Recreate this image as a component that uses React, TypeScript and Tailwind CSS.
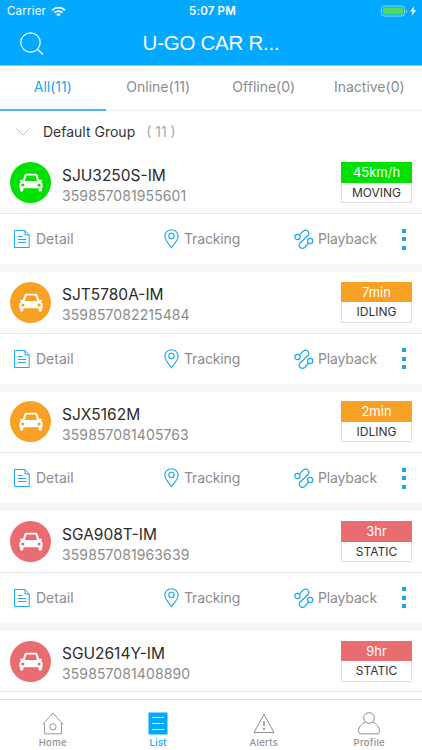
import { useState } from 'react';

interface Vehicle {
    name: string;
    imei: string;
    value: string;
    status: 'MOVING' | 'IDLING' | 'STATIC';
}

const vehicles: Vehicle[] = [
    { name: 'SJU3250S-IM', imei: '359857081955601', value: '45km/h', status: 'MOVING' },
    { name: 'SJT5780A-IM', imei: '359857082215484', value: '7min', status: 'IDLING' },
    { name: 'SJX5162M', imei: '359857081405763', value: '2min', status: 'IDLING' },
    { name: 'SGA908T-IM', imei: '359857081963639', value: '3hr', status: 'STATIC' },
    { name: 'SGU2614Y-IM', imei: '359857081408890', value: '9hr', status: 'STATIC' },
];

const statusColors = {
    MOVING: 'bg-[#00e001]',
    IDLING: 'bg-[#f9a124]',
    STATIC: 'bg-[#e96c70]',
};

const filters = ['All(11)', 'Online(11)', 'Offline(0)', 'Inactive(0)'];

function StatusBar() {
    return (
        <div className="h-[22px] flex items-center text-white text-[11.5px] leading-none">
            <div className="flex-1 flex items-center pl-[7px]">
                <span className="tracking-[0.2px] pt-px">Carrier</span>
                <svg className="ml-[5px]" width="15" height="11" viewBox="0 0 15 11">
                    <path d="M1.1 4.2a9.2 9.2 0 0 1 12.8 0" fill="none" stroke="white" strokeWidth="1.9" />
                    <path d="M3.5 6.7a5.8 5.8 0 0 1 8 0" fill="none" stroke="white" strokeWidth="1.8" />
                    <path d="M5.2 8.3a3.3 3.3 0 0 1 4.6 0L7.5 10.6z" fill="white" />
                </svg>
            </div>
            <span className="font-semibold tracking-[0.15px] pl-px pt-px">5:07 PM</span>
            <div className="flex-1 flex items-center justify-end pr-[5px]">
                <svg width="36" height="13" viewBox="0 0 36 13">
                    <rect x=".5" y="1" width="23" height="10" rx="2.4" fill="none" stroke="#8bd5fb" />
                    <rect x="2" y="2.5" width="20" height="7" rx="1" fill="#4cd964" />
                    <path d="M25 4.5V8c1.4-.4 1.4-3.1 0-3.5z" fill="#8bd5fb" />
                    <path d="M33.3 1.3L29 6.6h2.5l-.8 4.2L35 5.3h-2.6z" fill="white" />
                </svg>
            </div>
        </div>
    );
}

function CarIcon() {
    return (
        <svg width="24" height="19" viewBox="0 0 24 19">
            <path
                fillRule="evenodd"
                fill="white"
                d="M7.6.7h8.8c1.2 0 1.9.5 2.2 1.5l1.5 4.9 1-.3c1.2-.3 2 .1 2 .8s-.7 1-1.6 1c1.4.8 2.1 1.8 2.1 3.2v3.5h-.7v1.7c0 1-.6 1.6-1.6 1.6s-1.6-.6-1.6-1.6v-1.7H4.3V17c0 1-.6 1.6-1.6 1.6S1.1 18 1.1 17v-1.7H.4v-3.5c0-1.4.7-2.4 2.1-3.2-.9 0-1.6-.3-1.6-1s.8-1.1 2-.8l1 .3 1.5-4.9C5.7 1.2 6.4.7 7.6.7zM8.1 2.6c-.5 0-.8.2-.9.7L5.9 8h12.2l-1.3-4.7c-.1-.5-.4-.7-.9-.7zM3.9 10.4a1.6 1.6 0 1 0 0 3.2 1.6 1.6 0 0 0 0-3.2zm16.2 0a1.6 1.6 0 1 0 0 3.2 1.6 1.6 0 0 0 0-3.2z"
            />
        </svg>
    );
}

function DetailIcon() {
    return (
        <svg width="16" height="20" viewBox="0 0 16 20" fill="none" stroke="#22a8ea">
            <path d="M.5 1.5H11L15.2 6v12.5H.5zM11 1.5V6h4.2" />
            <path d="M4 7.5h4.5M4 10.5h8M4 13.5h8" />
        </svg>
    );
}

function TrackingIcon() {
    return (
        <svg width="15" height="20" viewBox="0 0 15 20" fill="none" stroke="#22a8ea" strokeWidth="1.1">
            <path d="M7.5 18.7C5.2 15.4.9 11 .9 7.4a6.6 6.6 0 0 1 13.2 0c0 3.6-4.3 8-6.6 11.3z" />
            <circle cx="7.5" cy="7" r="2.7" />
        </svg>
    );
}

function PlaybackIcon() {
    return (
        <svg width="20" height="20" viewBox="0 0 20 20" fill="none" stroke="#22a8ea" strokeWidth="1.2">
            <circle cx="3.5" cy="8" r="2.6" />
            <circle cx="16.2" cy="12" r="2.6" />
            <path d="M5.3 6.1l4-4.1c3.2-2.5 7 .8 4.9 4.3L6 14.2c-2.5 3.5 1.6 6.6 4.7 4.3l4-4.5" />
        </svg>
    );
}

function VehicleRow({ vehicle, showActions }: { vehicle: Vehicle; showActions: boolean }) {
    return (
        <div className={showActions ? 'h-[119.6px] shrink-0 border-b-8 border-[#f7f7f7] flex flex-col' : 'shrink-0'}>
            <div className="h-[61.5px] shrink-0 border-b border-[#e7e7e7] flex items-center px-[10px]">
                <div className={`size-[41px] rounded-full flex items-center justify-center ${statusColors[vehicle.status]}`}>
                    <CarIcon />
                </div>
                <div className="ml-[11px] flex-1">
                    <p className="text-[15.5px] leading-[20px] text-[#2b2b2b] mt-[6px]">{vehicle.name}</p>
                    <p className="text-[14px] leading-[20px] tracking-[0.1px] text-[#8c8c8c]">{vehicle.imei}</p>
                </div>
                <div className="w-[71px] h-[41px] text-center">
                    <div className={`h-[20.5px] text-white text-[13px] leading-[21px] ${statusColors[vehicle.status]}`}>
                        {vehicle.value}
                    </div>
                    <div className="h-[20.5px] border border-t-0 border-[#dfdfdf] text-[#333] text-[12px] leading-[20px]">
                        {vehicle.status}
                    </div>
                </div>
            </div>
            {showActions && (
                <div className="flex-1 flex items-center text-[14px] text-[#8c8c8c] leading-none">
                    <button className="w-[150px] pl-[14px] flex items-center gap-[6px]">
                        <DetailIcon />Detail
                    </button>
                    <button className="w-[144px] pl-[14px] flex items-center gap-[5px] tracking-[-0.15px]">
                        <TrackingIcon />Tracking
                    </button>
                    <button className="w-[100px] flex items-center gap-[4px] tracking-[-0.15px]">
                        <PlaybackIcon />Playback
                    </button>
                    <button className="ml-[8px] flex flex-col gap-[4.5px]">
                        <i className="size-[4px] bg-[#20a5e5]" />
                        <i className="size-[4px] bg-[#20a5e5]" />
                        <i className="size-[4px] bg-[#20a5e5]" />
                    </button>
                </div>
            )}
        </div>
    );
}

function HomeIcon() {
    return (
        <svg width="22" height="23" viewBox="0 0 22 23" fill="none" stroke="#999">
            <path d="M.8 12.5L11 .9l10.2 11.6M2.5 10.8v11h17v-11" />
            <circle cx="11" cy="14.8" r="3.1" />
        </svg>
    );
}

function ListIcon() {
    return (
        <svg width="20" height="23" viewBox="0 0 20 23">
            <path d="M.5.5h19v22H.5z" fill="#04a8ff" />
            <path d="M4 5.5h12M4 11.5h12M4 17.5h12" stroke="white" />
        </svg>
    );
}

function AlertsIcon() {
    return (
        <svg width="22" height="23" viewBox="0 0 22 23" fill="none" stroke="#8f8f8f">
            <path d="M11 2.5L21 20.5H1z" />
            <path d="M11 9v5M11 16v2" strokeWidth="1.5" />
        </svg>
    );
}

function ProfileIcon() {
    return (
        <svg width="22" height="23" viewBox="0 0 22 23" fill="none" stroke="#8f8f8f">
            <circle cx="11" cy="6" r="5.3" />
            <path d="M7.5 10.2C3.5 11.5.6 14.8.6 19.2c0 2.1.8 2.7 2.4 2.7h16c1.6 0 2.4-.6 2.4-2.7 0-4.4-2.9-7.7-6.9-9" />
        </svg>
    );
}

const navItems = [
    { label: 'Home', icon: HomeIcon },
    { label: 'List', icon: ListIcon },
    { label: 'Alerts', icon: AlertsIcon },
    { label: 'Profile', icon: ProfileIcon },
];

export default function App() {
    const [filter, setFilter] = useState(0);
    const [page, setPage] = useState('List');

    return (
        <div className="w-[422px] h-[750px] overflow-hidden bg-white flex flex-col font-['Inter',sans-serif]">
            <header className="h-[66px] shrink-0 bg-[#02a9ff] border-b border-[#7bd3fb]">
                <StatusBar />
                <div className="h-[43px] grid grid-cols-[1fr_auto_1fr] items-center">
                    <svg className="ml-[20px]" width="24" height="24" viewBox="0 0 24 24" fill="none" stroke="white" strokeWidth="1.2">
                        <circle cx="10.5" cy="10.5" r="9.7" />
                        <path d="M17.5 17.5l5.5 5" />
                    </svg>
                    <h1 className="text-white text-[20.5px] leading-none tracking-[-0.25px] font-['Liberation_Sans',sans-serif]">U-GO CAR R...</h1>
                </div>
            </header>

            <nav className="h-[45px] shrink-0 flex border-b border-[#ececec]">
                {filters.map((label, i) => (
                    <button
                        key={label}
                        onClick={() => setFilter(i)}
                        className={`flex-1 -mb-px pb-[3px] text-[14px] border-b-2 ${filter === i ? 'text-[#20a8ee] border-[#4db8ee]' : 'text-[#8c8c8c] border-transparent'}`}
                    >
                        {label}
                    </button>
                ))}
            </nav>

            <main className="h-[588px] shrink-0 overflow-hidden flex flex-col">
                <div className="h-[41.5px] shrink-0 flex items-center pl-[16px] text-[14px]">
                    <svg width="14" height="8" viewBox="0 0 14 8" fill="none" stroke="#c4c4c4">
                        <path d="M.5.5L7 7l6.5-6.5" />
                    </svg>
                    <span className="ml-[13px] text-[#333]">Default Group</span>
                    <span className="ml-[11px] text-[#aaa]">( 11 )</span>
                </div>
                {vehicles.map((v, i) => (
                    <VehicleRow key={v.imei} vehicle={v} showActions={i < vehicles.length - 1} />
                ))}
            </main>

            <footer className="flex-1 border-t border-[#dedede] flex">
                {navItems.map(({ label, icon: Icon }) => (
                    <button
                        key={label}
                        onClick={() => setPage(label)}
                        className={`flex-1 pt-[12px] flex flex-col items-center text-[9.5px] leading-[16px] font-medium tracking-[0.3px] ${page === label ? 'text-[#04a8ff]' : 'text-[#8f8f8f]'}`}
                    >
                        <Icon />
                        {label}
                    </button>
                ))}
            </footer>
        </div>
    );
}
